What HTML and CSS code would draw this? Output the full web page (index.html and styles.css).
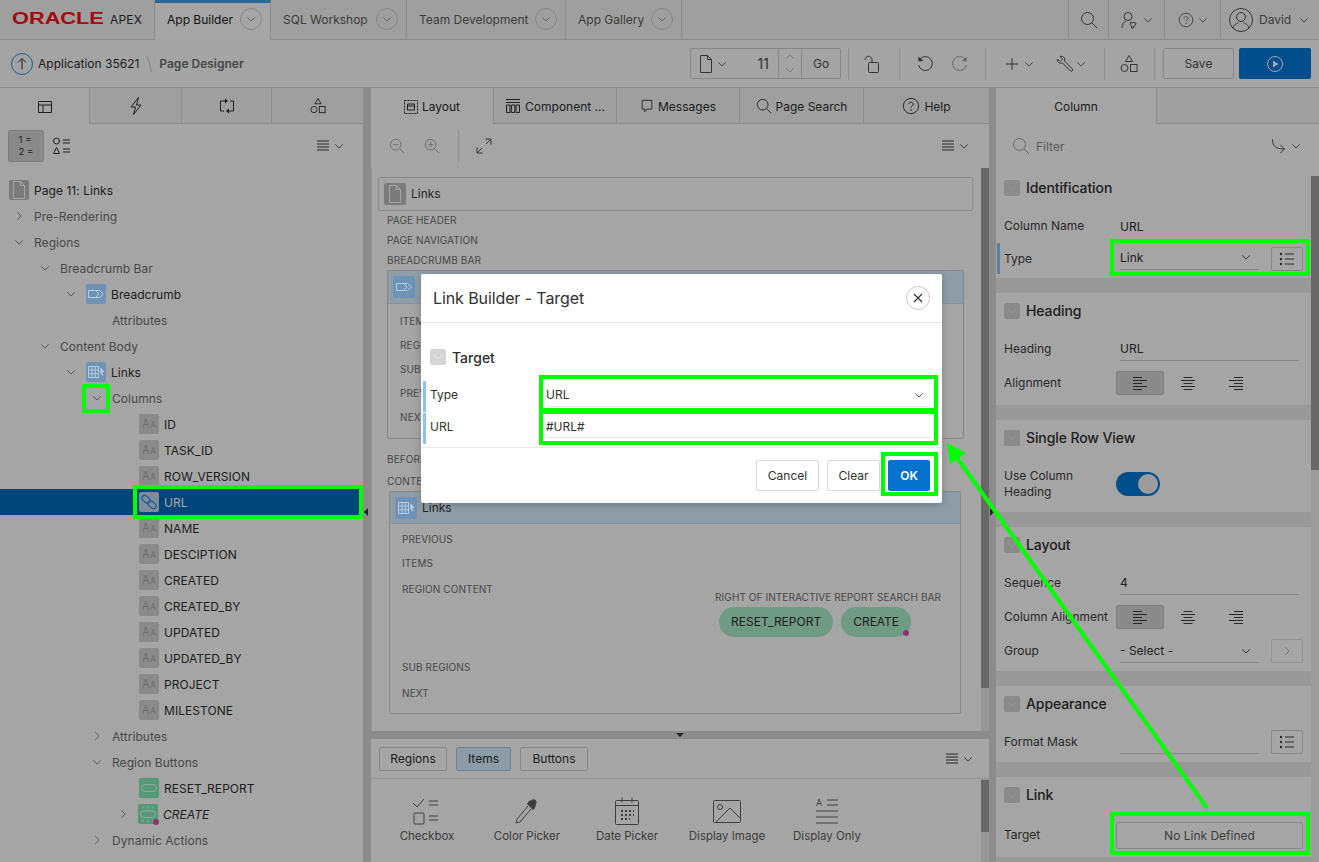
FILE: index.html
```html
<!DOCTYPE html>
<html lang="en">

<head>
    <meta charset="UTF-8">
    <title>Page Designer</title>
    <link rel="stylesheet" href="styles.css">
</head>

<body>
    <svg class="sprites" width="0" height="0">
        <symbol id="down" viewBox="0 0 12 12"><path d="M1.5 4l4.5 4.5L10.500 4" fill="none" stroke="currentColor"/></symbol>
        <symbol id="right" viewBox="0 0 12 12"><path d="M4 1.500L8.500 6 4 10.500" fill="none" stroke="currentColor"/></symbol>
        <symbol id="lines" viewBox="0 0 14 14"><path d="M1 2h12M1 5h12M1 8h12M1 11h12" fill="none" stroke="currentColor"/></symbol>
        <symbol id="search" viewBox="0 0 18 18"><circle cx="7.500" cy="7.500" r="6" fill="none" stroke="currentColor"/><path d="M12 12l5 5" stroke="currentColor"/></symbol>
        <symbol id="help" viewBox="0 0 20 20"><circle cx="10" cy="10" r="8.500" fill="none" stroke="currentColor"/><path d="M7.500 8c0-3 5-3 5 0 0 1.800-2.500 1.800-2.500 4" fill="none" stroke="currentColor"/><circle cx="10" cy="14.500" r=".8" fill="currentColor"/></symbol>
        <symbol id="doc" viewBox="0 0 16 20"><path d="M2.500 1.500h7l4 4v13h-11zM9.500 1.500v4h4" fill="none" stroke="currentColor"/></symbol>
        <symbol id="shapes" viewBox="0 0 18 20"><path d="M9 1.500l3.500 6h-7z" fill="none" stroke="currentColor"/><circle cx="4.500" cy="14" r="3.500" fill="none" stroke="currentColor"/><rect x="10.500" y="10.500" width="6.500" height="7" fill="none" stroke="currentColor"/></symbol>
        <symbol id="listing" viewBox="0 0 16 14"><circle cx="2" cy="2" r="1.200" fill="currentColor"/><circle cx="2" cy="7" r="1.200" fill="currentColor"/><circle cx="2" cy="12" r="1.200" fill="currentColor"/><path d="M6 2h9M6 7h9M6 12h9" stroke="currentColor"/></symbol>
        <symbol id="al-left" viewBox="0 0 16 14"><path d="M1 1.500h9M1 4.500h14M1 7.500h9M1 10.500h14M1 13.500h9" stroke="currentColor"/></symbol>
        <symbol id="al-center" viewBox="0 0 16 14"><path d="M3.500 1.500h9M1 4.500h14M3.500 7.500h9M1 10.500h14M3.500 13.500h9" stroke="currentColor"/></symbol>
        <symbol id="al-right" viewBox="0 0 16 14"><path d="M6 1.500h9M1 4.500h14M6 7.500h9M1 10.500h14M6 13.500h9" stroke="currentColor"/></symbol>
        <symbol id="crumb" viewBox="0 0 20 20"><path d="M2.500 6.500h11l4 3.500-4 3.500h-11z M9.500 6.500l3.500 3.500-3.500 3.500" fill="none" stroke="currentColor"/></symbol>
        <symbol id="report" viewBox="0 0 20 20"><path d="M2.500 4.500h10v11h-10zM2.500 8h10M2.500 11.800h10M6 4.500v11M9.300 4.500v11" fill="none" stroke="currentColor"/><path d="M14.500 5l4 5h-2l1 3-1.500.5-1-3-1 1z" fill="currentColor"/></symbol>
        <symbol id="button" viewBox="0 0 20 20"><rect x="2.500" y="6.500" width="15" height="7" rx="3.500" fill="none" stroke="currentColor"/></symbol>
        <symbol id="button-hot" viewBox="0 0 20 20"><rect x="2.500" y="7" width="15" height="6.500" rx="3.200" fill="none" stroke="currentColor"/><path d="M5 2v2.500M10 2v2.500M15 2v2.500M5 15.500v2.500M10 15.500v2.500M15 15.500v2.500" stroke="currentColor"/></symbol>
        <symbol id="chain" viewBox="0 0 20 20"><g fill="none" stroke="currentColor"><rect x="2.500" y="4.500" width="9" height="5.500" rx="2.700" transform="rotate(40 7 7.200)"/><rect x="8.500" y="10" width="9" height="5.500" rx="2.700" transform="rotate(40 13 12.800)"/></g></symbol>
    </svg>

    <div class="app">
        <header class="topbar">
            <div class="logo"><span class="logo-oracle">ORACLE</span><span class="logo-apex">APEX</span></div>
            <div class="navtab navtab-on navtab-builder">App Builder<span class="navcircle"><svg class="i10"><use href="#down"/></svg></span></div>
            <div class="navtab navtab-sql">SQL Workshop<span class="navcircle"><svg class="i10"><use href="#down"/></svg></span></div>
            <div class="navtab navtab-team">Team Development<span class="navcircle"><svg class="i10"><use href="#down"/></svg></span></div>
            <div class="navtab navtab-gallery">App Gallery<span class="navcircle"><svg class="i10"><use href="#down"/></svg></span></div>
            <div class="grow"></div>
            <div class="navtool navtool-search"><svg class="i18"><use href="#search"/></svg></div>
            <div class="navtool navtool-team">
                <svg class="i18" viewBox="0 0 18 18"><circle cx="7" cy="5.500" r="4" fill="none" stroke="currentColor"/><path d="M1 17c0-4 2-6 4-7M10 11l1.500 1 1.500-1 2 1.500-1 2-1.500 1v1.500h-2V15l-1.500-1.500z" fill="none" stroke="currentColor"/></svg>
                <svg class="i10"><use href="#down"/></svg>
            </div>
            <div class="navtool navtool-help"><svg class="i16"><use href="#help"/></svg><svg class="i10"><use href="#down"/></svg></div>
            <div class="navtool navtool-user">
                <svg class="avatar" viewBox="0 0 24 24"><circle cx="12" cy="12" r="11.500" fill="none" stroke="currentColor"/><circle cx="12" cy="9" r="4.500" fill="none" stroke="currentColor"/><path d="M4 20c1-4 4-4 5.500-5.500M20 20c-1-4-4-4-5.500-5.500" fill="none" stroke="currentColor"/></svg>
                <span class="user-name">David</span><svg class="i10"><use href="#down"/></svg>
            </div>
        </header>

        <div class="toolbar">
            <svg class="up-icon" viewBox="0 0 22 22"><circle cx="11" cy="11" r="10.500" fill="none" stroke="#2f8fe0"/><path d="M11 16.500V5.500M7 9.500l4-4 4 4" fill="none" stroke="#333"/></svg>
            <span class="crumb-app">Application 35621</span>
            <span class="crumb-sep"></span>
            <span class="crumb-page">Page Designer</span>
            <div class="grow"></div>
            <div class="pagepick">
                <div class="pagepick-num"><svg class="i16x20"><use href="#doc"/></svg><svg class="i10"><use href="#down"/></svg><span class="pagepick-val">11</span></div>
                <div class="pagepick-step"><svg class="i10 faint"><use href="#down" class="flip"/></svg><svg class="i10 faint"><use href="#down"/></svg></div>
                <div class="pagepick-go">Go</div>
            </div>
            <span class="tsep tsep-a"></span>
            <svg class="tool-lock" viewBox="0 0 18 20"><rect x="5.500" y="8.500" width="10" height="10" rx="1" fill="none" stroke="currentColor"/><path d="M2 6c0-5 7-5 7 0v2.500" fill="none" stroke="currentColor"/></svg>
            <span class="tsep tsep-b"></span>
            <svg class="tool-undo" viewBox="0 0 18 18"><path d="M4 4a7 7 0 1 1-1.500 6" fill="none" stroke="currentColor"/><path d="M2 1.500l.5 5 5-.5z" fill="currentColor"/></svg>
            <svg class="tool-redo faint" viewBox="0 0 18 18"><path d="M14 4a7 7 0 1 0 1.500 6" fill="none" stroke="currentColor"/><path d="M16 1.500l-.5 5-5-.5z" fill="currentColor"/></svg>
            <span class="tsep tsep-c"></span>
            <svg class="tool-plus" viewBox="0 0 14 14"><path d="M7 1v12M1 7h12" stroke="currentColor"/></svg>
            <svg class="i10 tool-chev"><use href="#down"/></svg>
            <svg class="tool-wrench" viewBox="0 0 18 18"><path d="M1.500 4l2.500 2.500L6.500 4 4 1.500c3-1 5.500 1.500 4.500 4.500l8 8c1 1-1 3-2 2l-8-8C3.500 9 .5 7 1.500 4z" fill="none" stroke="currentColor"/></svg>
            <svg class="i10 tool-chev2"><use href="#down"/></svg>
            <span class="tsep tsep-d"></span>
            <svg class="tool-shapes"><use href="#shapes"/></svg>
            <span class="tsep tsep-e"></span>
            <div class="btn-save">Save</div>
            <div class="btn-run"><svg class="i18" viewBox="0 0 18 18"><circle cx="9" cy="9" r="7.500" fill="none" stroke="currentColor"/><path d="M7 5.500l5.500 3.500L7 12.500z" fill="currentColor"/></svg></div>
        </div>

        <div class="main">
            <section class="left">
                <div class="tabs">
                    <div class="tab tab-on tw90"><svg class="i16" viewBox="0 0 16 16"><path d="M1.500 2.500h13v11h-13zM1.500 6h13M6 6v7.500" fill="none" stroke="currentColor"/></svg></div>
                    <div class="tab tw92"><svg class="i16x20" viewBox="0 0 16 20"><path d="M10.500 1.500L3 11h4.500l-2 7.500L13 9H8.500z" fill="none" stroke="currentColor"/></svg></div>
                    <div class="tab tw90"><svg class="i16" viewBox="0 0 16 16"><path d="M6 3H1.500v10H5M10 13h4.500V3H11" fill="none" stroke="currentColor"/><path d="M6 .5l3 2.500-3 2.500zM10 10.500L7 13l3 2.500z" fill="currentColor"/></svg></div>
                    <div class="tab tw91"><svg class="i16x20"><use href="#shapes"/></svg></div>
                </div>
                <div class="left-tools">
                    <div class="sort-on"><span class="mini">1 =<br>2 =</span></div>
                    <svg class="sort-off" viewBox="0 0 18 18"><circle cx="3.500" cy="4" r="3" fill="none" stroke="currentColor"/><path d="M3.500 10.500l3 6h-6zM10 3h7M10 6h7M10 12h7M10 15h7" fill="none" stroke="currentColor"/></svg>
                    <div class="grow"></div>
                    <div class="menu-btn"><svg class="i14"><use href="#lines"/></svg><svg class="i10"><use href="#down"/></svg></div>
                </div>
                <div class="tree">
                    <div class="node lv0 dark"><span class="chip chip-gray"><svg class="i16x20"><use href="#doc"/></svg></span><span class="label">Page 11: Links</span></div>
                    <div class="node lv1"><svg class="i10"><use href="#right"/></svg><span class="label">Pre-Rendering</span></div>
                    <div class="node lv1"><svg class="i10"><use href="#down"/></svg><span class="label">Regions</span></div>
                    <div class="node lv2"><svg class="i10"><use href="#down"/></svg><span class="label">Breadcrumb Bar</span></div>
                    <div class="node lv3 dark"><svg class="i10"><use href="#down"/></svg><span class="chip chip-blue"><svg class="i20"><use href="#crumb"/></svg></span><span class="label">Breadcrumb</span></div>
                    <div class="node lv4"><span class="label">Attributes</span></div>
                    <div class="node lv2"><svg class="i10"><use href="#down"/></svg><span class="label">Content Body</span></div>
                    <div class="node lv3 dark"><svg class="i10"><use href="#down"/></svg><span class="chip chip-blue"><svg class="i20"><use href="#report"/></svg></span><span class="label">Links</span></div>
                    <div class="node lv4 has-toggle"><svg class="i10"><use href="#down"/></svg><span class="label">Columns</span></div>
                    <div class="node lv5 dark"><span class="chip chip-gray chip-aa">A<small>A</small></span><span class="label">ID</span></div>
                    <div class="node lv5 dark"><span class="chip chip-gray chip-aa">A<small>A</small></span><span class="label">TASK_ID</span></div>
                    <div class="node lv5 dark"><span class="chip chip-gray chip-aa">A<small>A</small></span><span class="label">ROW_VERSION</span></div>
                    <div class="node lv5 selected"><span class="chip chip-link"><svg class="i20"><use href="#chain"/></svg></span><span class="label">URL</span></div>
                    <div class="node lv5 dark"><span class="chip chip-gray chip-aa">A<small>A</small></span><span class="label">NAME</span></div>
                    <div class="node lv5 dark"><span class="chip chip-gray chip-aa">A<small>A</small></span><span class="label">DESCIPTION</span></div>
                    <div class="node lv5 dark"><span class="chip chip-gray chip-aa">A<small>A</small></span><span class="label">CREATED</span></div>
                    <div class="node lv5 dark"><span class="chip chip-gray chip-aa">A<small>A</small></span><span class="label">CREATED_BY</span></div>
                    <div class="node lv5 dark"><span class="chip chip-gray chip-aa">A<small>A</small></span><span class="label">UPDATED</span></div>
                    <div class="node lv5 dark"><span class="chip chip-gray chip-aa">A<small>A</small></span><span class="label">UPDATED_BY</span></div>
                    <div class="node lv5 dark"><span class="chip chip-gray chip-aa">A<small>A</small></span><span class="label">PROJECT</span></div>
                    <div class="node lv5 dark"><span class="chip chip-gray chip-aa">A<small>A</small></span><span class="label">MILESTONE</span></div>
                    <div class="node lv4 has-toggle"><svg class="i10"><use href="#right"/></svg><span class="label">Attributes</span></div>
                    <div class="node lv4 has-toggle"><svg class="i10"><use href="#down"/></svg><span class="label">Region Buttons</span></div>
                    <div class="node lv5 dark"><span class="chip chip-green"><svg class="i20"><use href="#button"/></svg></span><span class="label">RESET_REPORT</span></div>
                    <div class="node lv5 dark has-toggle"><svg class="i10"><use href="#right"/></svg><span class="chip chip-green chip-dot"><svg class="i20"><use href="#button-hot"/></svg></span><span class="label italic">CREATE</span></div>
                    <div class="node lv4 has-toggle"><svg class="i10"><use href="#right"/></svg><span class="label">Dynamic Actions</span></div>
                </div>
            </section>

            <div class="split"><span class="tri tri-left"></span></div>

            <section class="center">
                <div class="tabs">
                    <div class="tab tab-on tw123"><svg class="i14 ico-gap" viewBox="0 0 14 14"><path d="M.5.500h13v13H.500z" fill="none" stroke="currentColor" stroke-dasharray="2 1"/><path d="M3.500 4h7v6h-7zM3.500 6h7" fill="none" stroke="currentColor"/></svg>Layout</div>
                    <div class="tab tw123"><svg class="i16 ico-gap" viewBox="0 0 16 16"><path d="M1 1.500h14M1 4.500h14M1.500 7h3.500v7.500H1.500zM6.300 7h3.500v7.500H6.300zM11 7h3.500v7.500H11z" fill="none" stroke="currentColor"/></svg>Component ...</div>
                    <div class="tab tw123"><svg class="i14 ico-gap" viewBox="0 0 14 16"><path d="M1.500 1.500h11v10H7L4.500 14.500v-3h-3z" fill="none" stroke="currentColor"/></svg>Messages</div>
                    <div class="tab tw124"><svg class="i16 ico-gap"><use href="#search"/></svg>Page Search</div>
                    <div class="tab tw125"><svg class="i18 ico-gap"><use href="#help"/></svg>Help</div>
                </div>
                <div class="center-tools">
                    <svg class="i16 faint" viewBox="0 0 18 18"><circle cx="7.500" cy="7.500" r="6" fill="none" stroke="currentColor"/><path d="M12 12l5 5M4.500 7.500h6" stroke="currentColor"/></svg>
                    <svg class="i16 faint zoom-plus" viewBox="0 0 18 18"><circle cx="7.500" cy="7.500" r="6" fill="none" stroke="currentColor"/><path d="M12 12l5 5M4.500 7.500h6M7.500 4.500v6" stroke="currentColor"/></svg>
                    <span class="center-sep"></span>
                    <svg class="i16" viewBox="0 0 16 16"><path d="M1 15l5-5M15 1l-5 5M9.500 1H15v5.500M1 9.500V15h5.500" fill="none" stroke="currentColor"/></svg>
                    <div class="grow"></div>
                    <div class="menu-btn"><svg class="i14"><use href="#lines"/></svg><svg class="i10"><use href="#down"/></svg></div>
                </div>
                <div class="canvas-wrap">
                    <div class="canvas">
                        <div class="page-box"><span class="chip chip-page"><svg class="i16x20"><use href="#doc"/></svg></span>Links</div>
                        <div class="slot slot-first">Page Header</div>
                        <div class="slot">Page Navigation</div>
                        <div class="slot">Breadcrumb Bar</div>
                        <div class="region region-crumb">
                            <div class="region-head"><span class="chip chip-blue chip-22"><svg class="i20"><use href="#crumb"/></svg></span></div>
                            <div class="slots">
                                <div class="slot24">Items</div>
                                <div class="slot24">Regions</div>
                                <div class="slot24">Sub</div>
                                <div class="slot24">Previous</div>
                                <div class="slot24">Next</div>
                            </div>
                        </div>
                        <div class="slot slot-before">Before Content</div>
                        <div class="slot slot-content">Content Body</div>
                        <div class="region region-links">
                            <div class="region-head"><span class="chip chip-blue chip-22"><svg class="i20"><use href="#report"/></svg></span><span class="region-name">Links</span></div>
                            <div class="slots">
                                <div class="slot24">Previous</div>
                                <div class="slot24">Items</div>
                                <div class="slot-content-row">
                                    <div class="slot-left">Region Content</div>
                                    <div class="slot-right">
                                        <div class="slot-cap">Right of Interactive Report Search Bar</div>
                                        <div class="pills">
                                            <span class="pill">RESET_REPORT</span>
                                            <span class="pill pill-dot">CREATE</span>
                                        </div>
                                    </div>
                                </div>
                                <div class="slot26">Sub Regions</div>
                                <div class="slot26">Next</div>
                            </div>
                        </div>
                    </div>
                    <div class="vscroll"><span class="thumb thumb-canvas"></span></div>
                </div>
                <div class="hsplit"><span class="tri tri-down"></span></div>
                <div class="gallery-tabs">
                    <span class="gbtn gw68">Regions</span>
                    <span class="gbtn gbtn-on gw55">Items</span>
                    <span class="gbtn gw68">Buttons</span>
                    <div class="grow"></div>
                    <div class="menu-btn"><svg class="i14"><use href="#lines"/></svg><svg class="i10"><use href="#down"/></svg></div>
                </div>
                <div class="gallery-wrap">
                    <div class="gallery">
                        <div class="gitem">
                            <svg class="gicon" viewBox="0 0 32 28"><path d="M2 7l4 4 7-8M18 5h9M18 9h9M18 24h9M18 20h9" fill="none" stroke="currentColor" transform="translate(0 -1)"/><rect x="3" y="16" width="10" height="11" rx="1" fill="none" stroke="currentColor"/></svg>
                            Checkbox
                        </div>
                        <div class="gitem">
                            <svg class="gicon" viewBox="0 0 32 28"><path d="M17 9L6 22l-1 4 4-1 11-13" fill="none" stroke="currentColor"/><path d="M16 7l6 6 2-2 1-4c2-3-2-6-4-4l-3 1z" fill="currentColor"/></svg>
                            Color Picker
                        </div>
                        <div class="gitem">
                            <svg class="gicon" viewBox="0 0 32 28"><rect x="4.500" y="3.500" width="23" height="24" rx="1" fill="none" stroke="currentColor"/><path d="M4.500 8.500h23M11 .5v5M21 .5v5" fill="none" stroke="currentColor"/><path d="M10 14h13M10 18h13M10 22h9" stroke="currentColor" stroke-width="2" stroke-dasharray="2 2"/></svg>
                            Date Picker
                        </div>
                        <div class="gitem">
                            <svg class="gicon" viewBox="0 0 32 28"><rect x="2.500" y="3.500" width="27" height="22" rx="1" fill="none" stroke="currentColor"/><circle cx="9" cy="10" r="2.500" fill="none" stroke="currentColor"/><path d="M5 25l14-14 10 10" fill="none" stroke="currentColor"/></svg>
                            Display Image
                        </div>
                        <div class="gitem">
                            <svg class="gicon" viewBox="0 0 32 28"><text x="5" y="9" font-family="Inter, sans-serif" font-size="9" fill="currentColor">A</text><path d="M16 3h11M16 8h11M5 14h22M5 20h22M5 26h22" stroke="currentColor"/></svg>
                            Display Only
                        </div>
                    </div>
                    <div class="vscroll"><span class="thumb thumb-gallery"></span></div>
                </div>
            </section>

            <div class="split split-right"><span class="tri tri-right"></span></div>

            <section class="right">
                <div class="tabs">
                    <div class="tab tab-on tw161">Column</div>
                    <div class="tab grow"></div>
                </div>
                <div class="right-tools">
                    <svg class="i18 faint"><use href="#search"/></svg>
                    <span class="filter">Filter</span>
                    <div class="grow"></div>
                    <svg class="i16" viewBox="0 0 16 16"><path d="M1.500 1.500c0 6.500 3 9.500 12 9.500M9.500 7l4 4-4 4" fill="none" stroke="currentColor"/></svg>
                    <svg class="i10"><use href="#down"/></svg>
                </div>
                <div class="props-wrap">
                    <div class="props">
                        <div class="group">
                            <div class="ghead"><span class="gtoggle"><svg class="i10"><use href="#down"/></svg></span>Identification</div>
                            <div class="prop"><span class="plabel">Column Name</span><span class="pvalue">URL</span></div>
                            <div class="prop prop-mark"><span class="plabel">Type</span><span class="field field-short">Link<svg class="i10"><use href="#down"/></svg></span><span class="sqbtn"><svg class="i16x14"><use href="#listing"/></svg></span></div>
                        </div>
                        <div class="group group-wide">
                            <div class="ghead"><span class="gtoggle"><svg class="i10"><use href="#down"/></svg></span>Heading</div>
                            <div class="prop"><span class="plabel">Heading</span><span class="field">URL</span></div>
                            <div class="prop"><span class="plabel">Alignment</span><span class="aligns"><span class="al al-on"><svg class="i16x14"><use href="#al-left"/></svg></span><span class="al"><svg class="i16x14"><use href="#al-center"/></svg></span><span class="al"><svg class="i16x14"><use href="#al-right"/></svg></span></span></div>
                        </div>
                        <div class="group group-switch">
                            <div class="ghead"><span class="gtoggle"><svg class="i10"><use href="#down"/></svg></span>Single Row View</div>
                            <div class="prop prop-tall"><span class="plabel">Use Column Heading</span><span class="switch"><span class="knob"></span></span></div>
                        </div>
                        <div class="group">
                            <div class="ghead"><span class="gtoggle"><svg class="i10"><use href="#down"/></svg></span>Layout</div>
                            <div class="prop"><span class="plabel">Sequence</span><span class="field">4</span></div>
                            <div class="prop"><span class="plabel">Column Alignment</span><span class="aligns"><span class="al al-on"><svg class="i16x14"><use href="#al-left"/></svg></span><span class="al"><svg class="i16x14"><use href="#al-center"/></svg></span><span class="al"><svg class="i16x14"><use href="#al-right"/></svg></span></span></div>
                            <div class="prop"><span class="plabel">Group</span><span class="field field-short">- Select -<svg class="i10"><use href="#down"/></svg></span><span class="sqbtn faint"><svg class="i10"><use href="#right"/></svg></span></div>
                        </div>
                        <div class="group">
                            <div class="ghead"><span class="gtoggle"><svg class="i10"><use href="#down"/></svg></span>Appearance</div>
                            <div class="prop"><span class="plabel">Format Mask</span><span class="field field-short"></span><span class="sqbtn"><svg class="i16x14"><use href="#listing"/></svg></span></div>
                        </div>
                        <div class="group">
                            <div class="ghead"><span class="gtoggle"><svg class="i10"><use href="#down"/></svg></span>Link</div>
                            <div class="prop prop-target"><span class="plabel">Target</span><span class="linkbtn">No Link Defined</span></div>
                        </div>
                    </div>
                    <div class="vscroll vscroll-props"><span class="thumb thumb-props"></span></div>
                </div>
            </section>
        </div>
    </div>

    <div class="overlay"></div>

    <div class="dialog">
        <div class="dialog-head">
            <span class="dialog-title">Link Builder - Target</span>
            <span class="dialog-close"><svg class="i10" viewBox="0 0 10 10"><path d="M1 1l8 8M9 1l-8 8" stroke="currentColor" stroke-width="1.200"/></svg></span>
        </div>
        <div class="dialog-body">
            <div class="dlg-group"><span class="dlg-toggle"><svg class="i10"><use href="#down"/></svg></span>Target</div>
            <div class="dlg-row"><span class="dlg-label">Type</span><span class="dlg-field">URL<svg class="i10"><use href="#down"/></svg></span></div>
            <div class="dlg-row"><span class="dlg-label">URL</span><span class="dlg-field dlg-field-url">#URL#</span></div>
        </div>
        <div class="dialog-foot">
            <span class="dlg-btn dlg-cancel">Cancel</span>
            <span class="dlg-btn dlg-clear">Clear</span>
            <span class="dlg-btn dlg-ok">OK</span>
        </div>
    </div>

    <!-- annotations drawn over the screenshot -->
    <svg class="marks" viewBox="0 0 1319 862">
        <g fill="none" stroke="#00ff00" stroke-width="4">
            <rect x="84" y="386" width="24" height="25"/>
            <rect x="135" y="487" width="226" height="30"/>
            <rect x="541" y="377" width="395" height="33"/>
            <rect x="541" y="412" width="395" height="31"/>
            <rect x="883" y="454" width="53" height="40"/>
            <rect x="1112" y="241" width="196" height="33"/>
            <rect x="1112" y="814" width="196" height="39"/>
            <path d="M1207 808L955 455"/>
        </g>
        <path d="M947 443L966 453L950 464z" fill="#00ff00"/>
    </svg>
</body>

</html>
```

FILE: styles.css
```css
* {
    box-sizing: border-box;
}

html,
body {
    height: 100%;
}

body {
    margin: 0;
    font-family: Inter, "Noto Sans", sans-serif;
    font-size: 12px;
    color: #303030;
    background: #fefefe;
    overflow: hidden;
}

svg {
    display: block;
    flex: none;
}

.sprites {
    position: absolute;
}

.grow {
    flex: 1;
}

.i10 { width: 10px; height: 10px; }
.i14 { width: 14px; height: 14px; }
.i16 { width: 16px; height: 16px; }
.i18 { width: 18px; height: 18px; }
.i20 { width: 20px; height: 20px; }
.i16x20 { width: 16px; height: 20px; }
.i16x14 { width: 16px; height: 14px; }

.faint {
    color: #a0a0a0;
}

.flip {
    transform: rotate(180deg);
    transform-origin: center;
}

.app {
    width: 1319px;
    height: 862px;
    display: flex;
    flex-direction: column;
}

/* top navigation */
.topbar {
    height: 40px;
    display: flex;
    background: #f5f5f5;
    border-bottom: 1px solid #d8d8d8;
}

.logo {
    width: 155px;
    padding-left: 12px;
    padding-bottom: 1px;
    display: flex;
    align-items: center;
    border-right: 1px solid #d8d8d8;
}

.logo-oracle {
    font-family: "Liberation Sans", sans-serif;
    font-weight: 700;
    font-size: 16px;
    color: #ff0a14;
    transform: scaleX(1.36);
    transform-origin: left center;
    width: 98px;
}

.logo-apex {
    font-size: 12px;
    letter-spacing: .2px;
}

.navtab {
    display: flex;
    align-items: center;
    padding-left: 12px;
    padding-right: 8px;
    padding-bottom: 1px;
    justify-content: space-between;
    color: #606060;
    border-right: 1px solid #d8d8d8;
}

.navtab-on {
    background: #fefefe;
    color: #202020;
    border-top: 3px solid #3f9fe8;
    margin-bottom: -1px;
    padding-bottom: 5px;
}

.navtab-builder { width: 116px; }
.navtab-sql { width: 136px; }
.navtab-team { width: 159px; }
.navtab-gallery { width: 116px; }

.navcircle {
    width: 22px;
    height: 22px;
    border: 1px solid #cfcfcf;
    border-radius: 50%;
    display: flex;
    align-items: center;
    justify-content: center;
    color: #8a8a8a;
}

.navtool {
    display: flex;
    align-items: center;
    justify-content: center;
    gap: 4px;
    border-left: 1px solid #d8d8d8;
    color: #505050;
}

.navtool-search { width: 40px; }
.navtool-team { width: 56px; }
.navtool-help { width: 56px; }
.navtool-user { width: 99px; justify-content: flex-start; padding-left: 8px; }

.avatar {
    width: 24px;
    height: 24px;
}

.user-name {
    margin-left: 2px;
    margin-right: 4px;
    color: #606060;
}

/* page designer toolbar */
.toolbar {
    height: 48px;
    display: flex;
    align-items: center;
    padding-left: 11px;
    padding-right: 8px;
    border-bottom: 1px solid #d8d8d8;
    background: #fcfcfc;
    color: #505050;
}

.up-icon {
    width: 22px;
    height: 22px;
    margin-right: 5px;
}

.crumb-app {
    color: #303030;
}

.crumb-sep {
    width: 1px;
    height: 16px;
    margin: 0 9px 0 10px;
    background: #c8c8c8;
    transform: rotate(-15deg);
}

.crumb-page {
    font-weight: 600;
    color: #707070;
}

.pagepick {
    width: 151px;
    height: 31px;
    display: flex;
    border: 1px solid #d0d0d0;
    border-radius: 2px;
}

.pagepick-num {
    width: 87px;
    display: flex;
    align-items: center;
    padding-left: 7px;
    gap: 3px;
}

.pagepick-val {
    margin-left: auto;
    margin-right: 9px;
    font-size: 14px;
}

.pagepick-step {
    width: 24px;
    border-left: 1px solid #d0d0d0;
    border-right: 1px solid #d0d0d0;
    display: flex;
    flex-direction: column;
    align-items: center;
    justify-content: center;
    gap: 3px;
}

.pagepick-go {
    flex: 1;
    display: flex;
    align-items: center;
    justify-content: center;
}

.tsep {
    width: 1px;
    height: 32px;
    background: #d8d8d8;
}

.tsep-a { margin-left: 7px; }
.tsep-b { margin-left: 18px; }
.tsep-c { margin-left: 16px; }
.tsep-d { margin-left: 18px; }
.tsep-e { margin-left: 16px; }

.tool-lock { width: 18px; height: 20px; margin-left: 14px; }
.tool-undo { width: 18px; height: 18px; margin-left: 16px; }
.tool-redo { width: 18px; height: 18px; margin-left: 17px; }
.tool-plus { width: 14px; height: 14px; margin-left: 19px; }
.tool-chev { margin-left: 5px; }
.tool-wrench { width: 18px; height: 18px; margin-left: 22px; }
.tool-chev2 { margin-left: 2px; }
.tool-shapes { width: 18px; height: 20px; margin-left: 15px; }

.btn-save {
    width: 71px;
    height: 31px;
    margin-left: 8px;
    border: 1px solid #d0d0d0;
    border-radius: 2px;
    display: flex;
    align-items: center;
    justify-content: center;
}

.btn-run {
    width: 72px;
    height: 31px;
    margin-left: 5px;
    background: #007ad7;
    border-radius: 2px;
    display: flex;
    align-items: center;
    justify-content: center;
    color: #fff;
}

/* main columns */
.main {
    flex: 1;
    display: flex;
    min-height: 0;
}

.left {
    width: 363px;
}

.center {
    width: 618px;
    display: flex;
    flex-direction: column;
}

.right {
    flex: 1;
    min-width: 0;
    border-left: 1px solid #d8d8d8;
}

.split {
    width: 8px;
    background: #d8d8d8;
    position: relative;
}

.split-right {
    width: 6px;
}

.tri {
    position: absolute;
    width: 0;
    height: 0;
    border-style: solid;
}

.tri-left {
    left: 1px;
    top: 420px;
    border-width: 4px 4px 4px 0;
    border-color: transparent #333 transparent transparent;
}

.tri-right {
    left: 1px;
    top: 420px;
    border-width: 4px 0 4px 4px;
    border-color: transparent transparent transparent #333;
}

.tri-down {
    left: 305px;
    top: 2px;
    border-width: 4px 4px 0;
    border-color: #333 transparent transparent;
}

.tabs {
    height: 36px;
    display: flex;
    background: #f5f5f5;
    border-bottom: 1px solid #d8d8d8;
}

.tab {
    display: flex;
    align-items: center;
    justify-content: center;
    padding-top: 1px;
    border-right: 1px solid #d8d8d8;
}

.tab-on {
    background: #fefefe;
    margin-bottom: -1px;
    color: #303030;
}

.tab:last-child {
    border-right: 0;
}

.tw90 { width: 90px; }
.tw91 { width: 91px; }
.tw92 { width: 92px; }
.tw123 { width: 123px; }
.tw124 { width: 124px; }
.tw125 { width: 125px; }
.tw161 { width: 161px; }

.ico-gap {
    margin-right: 4px;
}

/* left panel */
.left-tools {
    height: 44px;
    padding: 0 19px 0 8px;
    display: flex;
    align-items: center;
}

.sort-on {
    width: 36px;
    height: 32px;
    background: #d5d5d5;
    border: 1px solid #c0c0c0;
    border-radius: 2px;
    display: flex;
    align-items: center;
    justify-content: center;
}

.sort-off {
    margin-left: 9px;
    width: 18px;
    height: 18px;
}

.mini {
    font-size: 9.500px;
    line-height: 12px;
    display: block;
    white-space: nowrap;
}

.menu-btn {
    display: flex;
    align-items: center;
    gap: 4px;
    color: #404040;
}

.tree {
    padding-top: 9px;
}

.node {
    height: 26px;
    display: flex;
    align-items: center;
    color: #707070;
    white-space: nowrap;
    letter-spacing: .05px;
}

.node.dark {
    color: #303030;
}

.lv0 { padding-left: 9px; }
.lv1 { padding-left: 14px; }
.lv2 { padding-left: 40px; }
.lv3 { padding-left: 66px; }
.lv4 { padding-left: 112px; }
.lv5 { padding-left: 139px; }
.lv4.has-toggle { padding-left: 92px; }
.lv5.has-toggle { padding-left: 118px; }

.node > .i10 {
    margin-right: 10px;
    color: #707070;
}

.chip {
    width: 20px;
    height: 20px;
    margin-right: 5px;
    border-radius: 2px;
    display: flex;
    align-items: center;
    justify-content: center;
    position: relative;
    flex: none;
}

.chip-gray {
    background: #d5d5d5;
    color: #a0a0a0;
}

.chip-aa {
    font-size: 11px;
    font-weight: 300;
    align-items: baseline;
    line-height: 20px;
    gap: 1px;
}

.chip-aa small {
    font-size: 8.500px;
}

.lv0 .chip-gray {
    color: #fefefe;
    background: #bdbdbd;
}

.chip-blue {
    background: #6e93b7;
    color: #b4cce0;
    z-index: 1;
}

.chip-link {
    background: #c0d8f0;
    color: #1b7fd8;
}

.chip-green {
    background: #82edb9;
    color: #f0fff8;
}

.chip-dot::after,
.pill-dot::after {
    content: "";
    position: absolute;
    width: 6px;
    height: 6px;
    border-radius: 50%;
    background: #d952ac;
    right: -1px;
    bottom: -1px;
}

.selected {
    background: #006abb;
    color: #fefefe;
}

.italic {
    font-style: italic;
}

/* layout canvas */
.center-tools {
    height: 44px;
    padding: 0 20px 0 18px;
    display: flex;
    align-items: center;
    color: #505050;
}

.zoom-plus {
    margin-left: 19px;
}

.center-sep {
    width: 1px;
    height: 32px;
    background: #d8d8d8;
    margin: 0 17px 0 18px;
}

.canvas-wrap {
    height: 563px;
    display: flex;
    border-left: 1px solid #e4e4e4;
}

.canvas {
    flex: 1;
    min-width: 0;
    padding: 9px 8px 0 6px;
    position: relative;
}

.vscroll {
    width: 8px;
    flex: none;
    background: #e8e8e8;
}

.thumb {
    display: block;
    width: 100%;
    background: #a0a0a0;
}

.thumb-canvas { height: 520px; }
.thumb-gallery { height: 52px; margin-top: 1px; }
.thumb-props { height: 294px; }

.page-box {
    height: 34px;
    width: 595px;
    border: 1px solid #d5d5d5;
    border-radius: 2px;
    display: flex;
    align-items: center;
    padding-left: 5px;
    padding-bottom: 1px;
    color: #404040;
}

.chip-page {
    width: 22px;
    height: 22px;
    background: #bdbdbd;
    color: #fefefe;
}

.chip-22 {
    width: 22px;
    height: 22px;
}

.slot {
    height: 20px;
    line-height: 20px;
    margin-left: 9px;
    font-size: 10px;
    text-transform: uppercase;
    letter-spacing: .1px;
    color: #707070;
}

.slot-first {
    margin-top: -1px;
}

.slot-before {
    margin-top: 10px;
}

.slot-content {
    margin-top: 2px;
}

.region {
    border: 1px solid #d0d0d0;
    border-radius: 2px;
    color: #707070;
}

.region-crumb {
    width: 577px;
    height: 169px;
    margin: 0 0 0 9px;
}

.region-links {
    width: 572px;
    height: 223px;
    margin: 0 0 0 11px;
}

.region-head {
    height: 33px;
    padding-left: 5px;
    display: flex;
    align-items: center;
    background: #dcf2ff;
    border-bottom: 1px solid #cfe4f2;
    color: #404040;
}

.region-links .region-head {
    height: 32px;
}

.region-name {
    font-size: 12px;
}

.slots {
    padding: 5px 0 0 12px;
    font-size: 10px;
    text-transform: uppercase;
    letter-spacing: .1px;
}

.region-links .slots {
    padding-top: 3px;
}

.slot24 {
    height: 24px;
    line-height: 24px;
}

.slot26 {
    height: 26px;
    line-height: 26px;
}

.slot-content-row {
    display: flex;
    height: 79px;
    justify-content: space-between;
    padding-right: 19px;
}

.slot-left {
    line-height: 28px;
    height: 28px;
}

.slot-cap {
    margin-top: 15px;
    line-height: 14px;
    white-space: nowrap;
    letter-spacing: .08px;
}

.pills {
    display: flex;
    gap: 8px;
    margin: 3px 0 0 4px;
}

.pill {
    height: 30px;
    padding: 0 12px;
    border-radius: 15px;
    background: #abedcb;
    color: #303030;
    font-size: 12px;
    line-height: 30px;
    letter-spacing: 0;
    position: relative;
}

.pill-dot::after {
    right: 2px;
    bottom: 1px;
}

.hsplit {
    height: 8px;
    background: #d8d8d8;
    position: relative;
    margin-right: -1px;
}

.gallery-tabs {
    height: 40px;
    padding: 0 16px 0 8px;
    display: flex;
    align-items: center;
    gap: 9px;
    border-bottom: 1px solid #e8e8e8;
}

.gbtn {
    height: 24px;
    line-height: 22px;
    border: 1px solid #d0d0d0;
    border-radius: 2px;
    text-align: center;
}

.gbtn-on {
    background: #d6f0ff;
    border-color: #a8c8e0;
}

.gw68 { width: 68px; }
.gw55 { width: 55px; }

.gallery-wrap {
    flex: 1;
    display: flex;
    min-height: 0;
}

.gallery {
    flex: 1;
    display: flex;
    padding: 18px 0 0 6px;
}

.gitem {
    width: 100px;
    display: flex;
    flex-direction: column;
    align-items: center;
    color: #606060;
    font-size: 11.500px;
    gap: 4px;
}

.gicon {
    width: 32px;
    height: 28px;
}

/* property editor */
.right-tools {
    height: 44px;
    padding: 0 18px 0 16px;
    display: flex;
    align-items: center;
    gap: 4px;
    color: #505050;
}

.filter {
    color: #909090;
    margin-left: 2px;
}

.props-wrap {
    display: flex;
    height: 702px;
}

.props {
    flex: 1;
    min-width: 0;
    padding-top: 2px;
}

.vscroll-props {
    background: #f0f0f0;
    margin-top: 8px;
}

.group {
    padding-bottom: 3px;
    border-bottom: 15px solid #ebebeb;
}

.group-wide {
    padding-bottom: 5px;
}

.group-switch {
    padding-bottom: 4px;
}

.ghead {
    height: 36px;
    padding-left: 8px;
    padding-bottom: 1px;
    display: flex;
    align-items: center;
    font-size: 14px;
    font-weight: 500;
    letter-spacing: -.1px;
    color: #303030;
}

.gtoggle {
    width: 16px;
    height: 16px;
    margin-right: 6px;
    border-radius: 2px;
    background: #d5d5d5;
    display: flex;
    align-items: center;
    justify-content: center;
    color: #eee;
}

.prop {
    height: 34px;
    padding-left: 8px;
    padding-right: 8px;
    display: flex;
    align-items: center;
    position: relative;
}

.ghead + .prop {
    margin-top: 3px;
}

.prop-mark {
    height: 32px;
}

.prop-mark::before {
    content: "";
    position: absolute;
    left: 1px;
    top: 0;
    bottom: 1px;
    width: 3px;
    background: #8cc4f0;
}

.prop-mark .field {
    margin-top: -3px;
}

.ghead + .prop-tall {
    height: 48px;
    margin-top: 4px;
}

.ghead + .prop-target {
    height: 38px;
}

.plabel {
    width: 112px;
    flex: none;
    line-height: 16px;
    color: #404040;
}

.pvalue {
    padding-left: 4px;
}

.field {
    width: 179px;
    height: 24px;
    margin-left: 4px;
    display: flex;
    align-items: center;
    justify-content: space-between;
    border-bottom: 1px solid #d0d0d0;
    padding-right: 8px;
}

.field-short {
    width: 139px;
}

.sqbtn {
    width: 32px;
    height: 24px;
    margin-left: 12px;
    border: 1px solid #d0d0d0;
    border-radius: 2px;
    display: flex;
    align-items: center;
    justify-content: center;
    color: #404040;
}

.sqbtn.faint {
    color: #a0a0a0;
    border-color: #e0e0e0;
}

.aligns {
    display: flex;
}

.al {
    width: 48px;
    height: 24px;
    display: flex;
    align-items: center;
    justify-content: center;
    border-radius: 2px;
    color: #404040;
}

.al-on {
    background: #d5d5d5;
    border: 1px solid #c0c0c0;
}

.switch {
    width: 44px;
    height: 24px;
    border-radius: 12px;
    background: #007ad7;
    padding: 2px;
    display: flex;
    justify-content: flex-end;
}

.knob {
    width: 20px;
    height: 20px;
    border-radius: 50%;
    background: #f0f0f0;
}

.linkbtn {
    width: 187px;
    height: 27px;
    line-height: 25px;
    text-align: center;
    border: 1px solid #d0d0d0;
    border-radius: 2px;
    color: #606060;
}

/* dialog over the page */
.overlay {
    position: absolute;
    inset: 0;
    background: rgba(0, 0, 0, .35);
}

.dialog {
    position: absolute;
    z-index: 2;
    left: 421px;
    top: 274px;
    width: 521px;
    height: 229px;
    background: #fff;
    border-radius: 2px;
    color: #303030;
    display: flex;
    flex-direction: column;
    box-shadow: 0 2px 8px rgba(0, 0, 0, .2);
}

.dialog-head {
    height: 49px;
    padding: 0 12px;
    display: flex;
    align-items: center;
    justify-content: space-between;
    border-bottom: 1px solid #e8e8e8;
}

.dialog-title {
    font-size: 16px;
    letter-spacing: -.1px;
}

.dialog-close {
    width: 24px;
    height: 24px;
    border: 1px solid #c8c8c8;
    border-radius: 50%;
    display: flex;
    align-items: center;
    justify-content: center;
}

.dialog-body {
    height: 125px;
    padding-top: 26px;
    border-bottom: 1px solid #e8e8e8;
}

.dlg-group {
    height: 16px;
    padding-left: 9px;
    display: flex;
    align-items: center;
    font-size: 14px;
    font-weight: 500;
    margin-bottom: 15px;
}

.dlg-toggle {
    width: 16px;
    height: 16px;
    margin-right: 6px;
    border-radius: 2px;
    background: #d5d5d5;
    display: flex;
    align-items: center;
    justify-content: center;
    color: #eee;
}

.dlg-row {
    height: 32px;
    display: flex;
    align-items: center;
    padding-left: 2px;
}

.dlg-label {
    width: 122px;
    height: 31px;
    line-height: 27px;
    padding-left: 4px;
    border-left: 3px solid #8cc4f0;
}

.dlg-field {
    width: 385px;
    height: 26px;
    margin-left: 1px;
    align-self: flex-start;
    margin-top: 1px;
    display: flex;
    align-items: center;
    justify-content: space-between;
    padding-top: 2px;
    padding-right: 7px;
    border-bottom: 1px solid #e4e4e4;
}

.dlg-field-url {
    margin-top: 0;
    padding-top: 4px;
}

.dialog-foot {
    flex: 1;
    display: flex;
    justify-content: flex-end;
    align-items: center;
    gap: 8px;
    padding-right: 12px;
}

.dlg-btn {
    height: 31px;
    line-height: 29px;
    border: 1px solid #d8d8d8;
    border-radius: 2px;
    text-align: center;
}

.dlg-cancel { width: 63px; }
.dlg-clear { width: 53px; }

.dlg-ok {
    width: 42px;
    background: #0572ce;
    border-color: #0572ce;
    color: #fff;
    font-weight: 600;
}

.marks {
    position: absolute;
    z-index: 3;
    left: 0;
    top: 0;
    width: 1319px;
    height: 862px;
}
```
